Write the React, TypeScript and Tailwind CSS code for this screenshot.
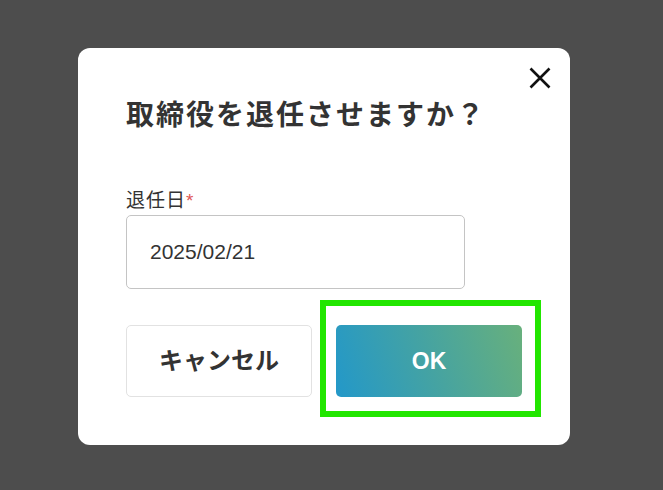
import React from "react";

export default function App() {
  const font = { fontFamily: '"Liberation Sans", "Noto Sans CJK JP", sans-serif' };
  return (
    <div
      className="w-[663px] h-[490px] bg-[#4d4d4d] pl-[78px] pt-[48px] overflow-hidden"
      style={font}
    >
      <div className="relative w-[492px] h-[397px] bg-white rounded-xl px-12 pt-[48px]">
        <button className="absolute left-[450px] top-[19px] w-[24px] h-[22px]" aria-label="close">
          <svg width="24" height="22" viewBox="0 0 24 22">
            <path d="M2.5 1.5 L21.5 20.5 M21.5 1.5 L2.5 20.5" stroke="#111" strokeWidth="2.6" strokeLinecap="butt" />
          </svg>
        </button>
        <h2 className="text-[28px] font-bold text-[#333] leading-[40px] tracking-[2px]">
          取締役を退任させますか？
        </h2>
        <div className="mt-[53px] text-[19px] text-[#333] leading-[24px] tracking-[1px]">
          退任日<span className="text-[#e05555]">*</span>
        </div>
        <div className="mt-[2px] w-[339px] h-[74px] border border-[#c4c4c4] rounded-[5px] pl-[23px] flex items-center text-[21px] text-[#333]">
          2025/02/21
        </div>
        <div className="mt-[36px] flex gap-6">
          <button className="w-[186px] h-[72px] border border-[#e2e2e2] rounded-[5px] bg-white text-[24px] font-bold text-[#333] flex items-center justify-center">
            キャンセル
          </button>
          <div className="relative">
            <button className="w-[186px] h-[72px] rounded-[5px] bg-[linear-gradient(72deg,#2398c9_0%,#45a3a2_50%,#68b07c_100%)] text-white text-[23px] font-bold flex items-center justify-center">
              OK
            </button>
            <div className="absolute left-[-16px] top-[-25px] w-[221px] h-[117px] border-[6px] border-[#22e600] pointer-events-none" />
          </div>
        </div>
      </div>
    </div>
  );
}
